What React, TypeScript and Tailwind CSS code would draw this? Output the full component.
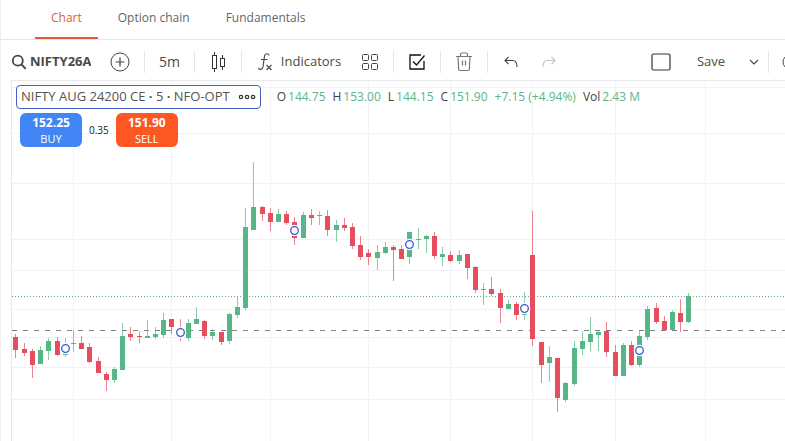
import { useState } from "react";
import type { ReactNode } from "react";

// [x, high, bodyTop, bodyBottom, low, rising]
type Candle = [number, number, number, number, number, 0 | 1];

const CANDLES: Candle[] = [
  [15, 334, 337, 350, 358, 0], [24, 343, 349, 353, 356, 0], [32, 349, 351, 365, 378, 0], [40, 346, 350, 364, 364, 1],
  [48, 338, 341, 351, 360, 1], [57, 337, 341, 355, 356, 0], [65, 338, 354, 355, 357, 1], [73, 330, 343, 344, 352, 1],
  [81, 336, 343, 349, 349, 0], [89, 343, 347, 362, 363, 0], [98, 357, 361, 373, 373, 0], [106, 372, 374, 380, 391, 0],
  [114, 367, 369, 380, 383, 1], [122, 323, 336, 370, 370, 1], [130, 327, 334, 337, 341, 0], [139, 331, 336, 337, 343, 0],
  [147, 320, 336, 338, 338, 1], [155, 327, 334, 337, 339, 1], [163, 313, 320, 335, 338, 1], [171, 319, 319, 327, 334, 0],
  [180, 319, 330, 335, 341, 0], [188, 319, 323, 338, 341, 1], [196, 307, 319, 324, 324, 1], [204, 320, 321, 336, 339, 0],
  [212, 329, 332, 336, 340, 1], [221, 332, 332, 342, 345, 0], [229, 313, 314, 341, 344, 1], [237, 297, 307, 315, 318, 1],
  [245, 208, 227, 308, 310, 1], [253, 162, 207, 230, 230, 1], [262, 206, 207, 214, 221, 0], [270, 208, 213, 222, 231, 0],
  [278, 209, 214, 222, 222, 1], [286, 211, 214, 223, 225, 0], [294, 217, 222, 238, 245, 0], [303, 212, 215, 238, 238, 1],
  [311, 209, 215, 218, 225, 0], [319, 211, 215, 216, 225, 1], [327, 210, 216, 230, 236, 0], [336, 220, 225, 230, 242, 1],
  [344, 218, 225, 228, 231, 0], [352, 223, 227, 246, 249, 0], [360, 236, 245, 257, 260, 0], [368, 249, 253, 257, 265, 0],
  [377, 245, 252, 258, 270, 1], [385, 242, 247, 253, 254, 1], [393, 245, 247, 250, 281, 0], [401, 245, 249, 259, 259, 0],
  [409, 232, 232, 257, 264, 1], [418, 228, 239, 240, 249, 1], [426, 235, 236, 239, 253, 1], [434, 232, 236, 256, 259, 0],
  [442, 247, 254, 257, 266, 1], [450, 251, 255, 261, 262, 0], [459, 250, 255, 261, 264, 1], [467, 254, 254, 268, 279, 0],
  [475, 266, 267, 290, 293, 0], [483, 283, 289, 290, 305, 1], [491, 277, 289, 294, 296, 0], [500, 289, 293, 308, 323, 0],
  [508, 300, 304, 309, 309, 1], [516, 302, 304, 315, 320, 0], [524, 292, 314, 315, 320, 1], [532, 211, 255, 339, 346, 0],
  [541, 342, 342, 365, 383, 0], [549, 346, 357, 363, 382, 1], [557, 358, 358, 398, 412, 0], [565, 382, 383, 400, 402, 1],
  [574, 341, 348, 384, 386, 1], [582, 331, 341, 349, 355, 1], [590, 317, 334, 342, 352, 1], [598, 331, 332, 335, 351, 1],
  [606, 322, 331, 352, 357, 0], [615, 345, 352, 376, 376, 0], [623, 343, 345, 376, 376, 1], [631, 341, 345, 365, 366, 0],
  [639, 331, 336, 365, 367, 1], [647, 306, 309, 337, 340, 1], [656, 303, 308, 322, 324, 0], [664, 316, 321, 330, 330, 0],
  [672, 310, 312, 330, 330, 1], [680, 299, 313, 322, 332, 0], [688, 293, 296, 322, 323, 1],
];

const MARKERS = [[65, 348], [180, 332], [294, 230], [409, 244], [524, 308], [639, 350]];
const GRID_X = [73, 171, 270, 368, 450, 532, 615, 705];
const GRID_Y = [87, 133, 183, 239, 270, 309, 337, 367, 399];

const TABS = ["Chart", "Option chain", "Fundamentals"];

const QUOTES = [
  { label: "O", value: "144.75" },
  { label: "H", value: "153.00" },
  { label: "L", value: "144.15" },
  { label: "C", value: "151.90" },
  { label: "", value: "+7.15 (+4.94%)" },
  { label: "Vol", value: "2.43 M" },
];

function Divider() {
  return <span className="h-[22px] w-px shrink-0 bg-[#e4e5e8]" />;
}

function ToolButton({ label, className = "w-[46px]", children }: { label: string; className?: string; children: ReactNode }) {
  return (
    <button type="button" aria-label={label} className={`flex h-full shrink-0 items-center justify-center ${className}`}>
      {children}
    </button>
  );
}

function PriceChart() {
  return (
    <svg className="absolute inset-0 h-full w-full" role="img" aria-label="Price chart">
      {/* candle data is in page space, the plot starts at 12,81 */}
      <svg x="-12" y="-81" overflow="visible" shapeRendering="crispEdges">
        {GRID_X.map((x) => (
          <rect key={x} x={x} y="81" width="1" height="3000" fill="#f1f2f3" />
        ))}
        {GRID_Y.map((y) => (
          <rect key={y} x="12" y={y} width="6000" height="1" fill="#f1f2f3" />
        ))}
        <path d="M12 330.5H6000" stroke="#7b7f86" strokeDasharray="5 6" />
        <path d="M12 296.5H6000" stroke="#5fa68b" strokeDasharray="1 2" />
        {CANDLES.map(([x, high, top, bottom, low, rising]) => (
          <g key={x} fill={rising ? "#56b786" : "#e64e5e"}>
            <rect x={x} y={high} width="1" height={low - high} opacity="0.7" />
            <rect x={x - 2} y={top} width="5" height={bottom - top} />
          </g>
        ))}
        <g shapeRendering="geometricPrecision">
          {MARKERS.map(([x, y]) => (
            <g key={x}>
              <circle cx={x + 0.5} cy={y + 0.5} r="5.8" fill="#fff" />
              <circle cx={x + 0.5} cy={y + 0.5} r="3.8" fill="#fff" stroke="#3558d4" strokeWidth="1.3" />
            </g>
          ))}
        </g>
      </svg>
    </svg>
  );
}

function Toolbar() {
  const [symbol, setSymbol] = useState("NIFTY26AUG24200CE");

  return (
    <div className="flex h-11 items-center overflow-hidden pl-[10px] text-[13px] text-[#4a4a4a]">
      <label className="flex w-20 shrink-0 items-center gap-[3px]">
        <svg width="16" height="16" viewBox="0 0 16 16" fill="none" stroke="#444" strokeWidth="1.8" className="shrink-0" aria-hidden>
          <circle cx="6.8" cy="6.7" r="5" />
          <path d="M10.5 10.5l4.2 4.3" />
        </svg>
        <input
          aria-label="Symbol"
          value={symbol}
          onChange={(e) => setSymbol(e.target.value)}
          className="w-full min-w-0 bg-transparent font-bold outline-none"
        />
      </label>
      <ToolButton label="Compare" className="w-[53px] pl-1">
        <svg width="20" height="20" viewBox="0 0 20 20" fill="none" stroke="#444">
          <circle cx="10" cy="10" r="9" />
          <path d="M5.5 10h9M10 5.5v9" strokeWidth="1.2" />
        </svg>
      </ToolButton>
      <Divider />
      <ToolButton label="Interval" className="w-[49px] text-sm">5m</ToolButton>
      <Divider />
      <ToolButton label="Chart type" className="w-[46px] pl-[2px]">
        <svg width="16" height="20" viewBox="0 0 16 20" fill="none" stroke="#333" shapeRendering="crispEdges">
          <path d="M1.5 3.5h4v13h-4zM3.5 0v3M3.5 17v3M9.5 6.5h4v8h-4zM11.5 3v3M11.5 15v3" />
        </svg>
      </ToolButton>
      <Divider />
      <ToolButton label="Indicators" className="w-[110px] gap-2 pl-1">
        <svg width="16" height="20" viewBox="0 0 16 20" fill="none" stroke="#444" aria-hidden>
          <path d="M12 3.5C12 1.5 8 .8 7.5 4L6 15c-.4 3-4 3-4.5 1M4 7.5h6.5M9.5 13l5 5M14.5 13l-5 5" strokeWidth="1.1" />
        </svg>
        Indicators
      </ToolButton>
      <ToolButton label="Templates" className="w-[41px] pr-[5px]">
        <svg width="18" height="18" viewBox="0 0 18 18" fill="none" stroke="#444">
          <rect x="1.5" y="1.5" width="6" height="6" rx="1" />
          <rect x="10.5" y="1.5" width="6" height="6" rx="1" />
          <rect x="1.5" y="10.5" width="6" height="6" rx="1" />
          <rect x="10.5" y="10.5" width="6" height="6" rx="1" />
        </svg>
      </ToolButton>
      <Divider />
      <ToolButton label="Orders">
        <svg width="18" height="18" viewBox="0 0 18 18" fill="none" stroke="#111" strokeWidth="1.3">
          <path d="M13 2H2v14h14V8" />
          <path d="M5 8.5l3.5 3.5L16.5 2.5" />
        </svg>
      </ToolButton>
      <Divider />
      <ToolButton label="Remove drawings">
        <svg width="18" height="20" viewBox="0 0 18 20" fill="none" stroke="#777" strokeWidth="1.2">
          <path d="M1 4.5h16M3 4.5l.6 12.5q.1 1.5 1.6 1.5h7.6q1.5 0 1.6-1.5L15 4.5M5.500 4V2.500q0-1.500 1.500-1.500h4q1.500 0 1.500 1.500V4M7.500 8.500v5M10.500 8.500v5" />
        </svg>
      </ToolButton>
      <Divider />
      <ToolButton label="Undo">
        <svg width="14" height="12" viewBox="0 0 14 12" fill="none" stroke="#444" strokeWidth="1.1">
          <path d="M4.5 1L1 4.5 4.5 8M1 4.5h7.5q4.5 0 4.5 6.5" />
        </svg>
      </ToolButton>
      <ToolButton label="Redo" className="w-[30px]">
        <svg width="14" height="12" viewBox="0 0 14 12" fill="none" stroke="#c4c4c4" strokeWidth="1.1">
          <path d="M9.5 1L13 4.5 9.5 8M13 4.5H5.5Q1 4.5 1 11" />
        </svg>
      </ToolButton>
      <div className="ml-auto flex h-full shrink-0 items-center">
        <ToolButton label="Layout" className="w-[30px]">
          <svg width="20" height="18" viewBox="0 0 20 18" fill="none" stroke="#333" strokeWidth="1.2">
            <rect x="1" y="1" width="18" height="16" rx="1.5" />
          </svg>
        </ToolButton>
        <ToolButton label="Save" className="w-[70px]">Save</ToolButton>
        <ToolButton label="Save options" className="w-[22px] pr-[6px]">
          <svg width="10" height="6" viewBox="0 0 10 6" fill="none" stroke="#444" strokeWidth="1.1">
            <path d="M1 1l4 4 4-4" />
          </svg>
        </ToolButton>
        <Divider />
        <button type="button" aria-label="Settings" className="w-4 overflow-hidden pl-[13px]">
          <svg width="16" height="16" viewBox="0 0 16 16" fill="none" stroke="#444" className="max-w-none">
            <circle cx="8" cy="8" r="7" />
          </svg>
        </button>
      </div>
    </div>
  );
}

export default function App() {
  const [tab, setTab] = useState("Chart");

  return (
    <div className="flex min-h-screen flex-col overflow-hidden border-l border-[#efefef] bg-white font-['Open_Sans',sans-serif]">
      <nav className="flex h-10 gap-1 border-b border-[#e6e6e6] pl-[34px] text-xs">
        {TABS.map((name) => (
          <button
            key={name}
            type="button"
            onClick={() => setTab(name)}
            className={`h-[39px] border-b-2 px-4 pb-[2px] ${name === tab ? "border-[#df5b3e] text-[#df5b3e]" : "border-transparent text-[#666]"}`}
          >
            {name}
          </button>
        ))}
      </nav>
      <Toolbar />
      <main className="relative -mt-1 ml-[10px] flex-1 border-t border-l border-[#e8e9eb]">
        <PriceChart />
        <div className="relative flex flex-col gap-1 pt-1 pl-1">
          <div className="flex items-center gap-4 whitespace-nowrap">
            <div className="flex h-6 items-center gap-2 rounded border border-[#3f62c8] bg-white px-1 text-[13px] text-[#555]">
              <span>
                NIFTY AUG 24200 CE <b>·</b> 5 <b>·</b> NFO-OPT
              </span>
              <button type="button" aria-label="More">
                <svg width="18" height="6" viewBox="0 0 18 6" fill="none" stroke="#333" strokeWidth="1.2">
                  <circle cx="3" cy="3" r="1.7" />
                  <circle cx="9" cy="3" r="1.7" />
                  <circle cx="15" cy="3" r="1.7" />
                </svg>
              </button>
            </div>
            <dl className="flex gap-[7px] text-xs">
              {QUOTES.map((q) => (
                <div key={q.value} className="flex gap-[2px]">
                  {q.label && <dt className="text-[#444]">{q.label}</dt>}
                  <dd className="text-[#5bb48b]">{q.value}</dd>
                </div>
              ))}
            </dl>
          </div>
          <div className="flex items-center gap-[7px] pl-1">
            <button type="button" className="flex h-[34px] w-[62px] flex-col items-center justify-center rounded-md bg-[#4285f4] text-white">
              <span className="text-xs leading-[17px] font-bold">152.25</span>
              <span className="text-[11px] leading-[15px]">BUY</span>
            </button>
            <span className="text-[10px] text-[#222]">0.35</span>
            <button type="button" className="flex h-[34px] w-[62px] flex-col items-center justify-center rounded-md bg-[#ff5722] text-white">
              <span className="text-xs leading-[17px] font-bold">151.90</span>
              <span className="text-[11px] leading-[15px]">SELL</span>
            </button>
          </div>
        </div>
      </main>
    </div>
  );
}
